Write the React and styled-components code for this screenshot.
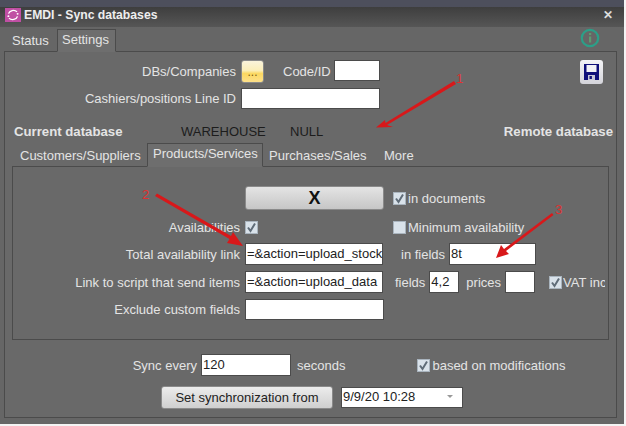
import styled, { createGlobalStyle } from "styled-components";

const GlobalStyle = createGlobalStyle`
  html, body { margin: 0; padding: 0; background: #f4f4f4; }
  * { box-sizing: border-box; }
`;

const Check = ({ on = true }) => (
  <CheckBox>
    {on && (
      <svg width="11" height="11" viewBox="0 0 11 11">
        <path d="M2 5.5 L4.5 9 L9 1.5" fill="none" stroke="#5f6c78" strokeWidth="2" />
      </svg>
    )}
  </CheckBox>
);

const AppLogo = () => (
  <LogoBox>
    <svg width="16" height="14" viewBox="0 0 16 16" preserveAspectRatio="none">
      <path d="M3.5 6.5 A5 5 0 0 1 12 4.5" fill="none" stroke="#fff" strokeWidth="1.4" />
      <path d="M12.5 9.5 A5 5 0 0 1 4 11.5" fill="none" stroke="#fff" strokeWidth="1.4" />
      <circle cx="12.6" cy="6.6" r="1" fill="#fff" />
      <circle cx="3.4" cy="9.4" r="1" fill="#fff" />
    </svg>
  </LogoBox>
);

const InfoIcon = () => (
  <InfoWrap>
    <svg width="20" height="20" viewBox="0 0 20 20">
      <circle cx="10" cy="10" r="8.2" fill="none" stroke="#2c9f88" strokeWidth="2.2" />
      <rect x="9" y="8.5" width="2.2" height="6" fill="#5e9a72" />
      <rect x="9" y="5" width="2.2" height="2" fill="#5e9a72" />
    </svg>
  </InfoWrap>
);

const Floppy = () => (
  <svg width="17" height="18" viewBox="0 0 17 18">
    <path d="M1 1 H16 V17 H1 Z" fill="#10107a" />
    <rect x="3.5" y="2" width="10" height="7" fill="#f2f2f6" />
    <rect x="5" y="12" width="7" height="5" fill="#c8c8d8" />
    <rect x="6.5" y="13" width="2.4" height="3" fill="#10107a" />
  </svg>
);

const Annotations = () => (
  <Overlay width="624" height="424" viewBox="0 0 624 424">
    <g fill="#d8181a">
      <polygon points="454,81 456,84 387,125 393,127 376,127.5 385,120 385.5,123" />
      <polygon points="155,196 157,193.5 231,236 233,232 243,246 227,243 229.5,239" />
      <polygon points="552,213 553.5,215 506,251 509,254 496,258 501,245 504,249" />
    </g>
    <AnnotationText x="456" y="83">1</AnnotationText>
    <AnnotationText x="142" y="199">2</AnnotationText>
    <AnnotationText x="555" y="214">3</AnnotationText>
  </Overlay>
);

export default function App() {
  return (
    <Window>
      <GlobalStyle />
      <TopStrip />
      <TitleBar>
        <AppLogo />
        <Title>EMDI - Sync databases</Title>
        <Close>✕</Close>
      </TitleBar>
      <Body>
        <TabRow>
          <Tab $w={52}>Status</Tab>
          <Tab $w={59} $active>Settings</Tab>
          <InfoIcon />
        </TabRow>
        <OuterPanel>
          <Row $h={23}>
            <Label $w={231}>DBs/Companies</Label>
            <DotsButton>...</DotsButton>
            <Text $ml={19}>Code/ID</Text>
            <Input $w={46} $h={21} $ml={3} $self="flex-start" />
            <SaveButton>
              <Floppy />
            </SaveButton>
          </Row>
          <Row $h={21} $mt={5}>
            <Label $w={231}>Cashiers/positions Line ID</Label>
            <Input $w={139} $ml={5} />
          </Row>
          <DbRow>
            <DbTitle>Current database</DbTitle>
            <DbValue $left={176}>WAREHOUSE</DbValue>
            <DbValue $left={285}>NULL</DbValue>
            <DbRemote>Remote database</DbRemote>
          </DbRow>
          <InnerTabs>
            <InnerTab $w={134}>Customers/Suppliers</InnerTab>
            <InnerTab $w={116} $active>Products/Services</InnerTab>
            <InnerTab $w={115} $pl={6}>Purchases/Sales</InnerTab>
            <InnerTab $w={40} $pl={6}>More</InnerTab>
          </InnerTabs>
          <InnerPanel>
            <Row $h={24}>
              <Spacer $w={232} />
              <XButton>X</XButton>
              <Check />
              <Text $ml={2}>in documents</Text>
            </Row>
            <Row $h={16} $mt={9}>
              <Label $w={227}>Availabilities</Label>
              <Spacer $w={5} />
              <Check />
              <Spacer $w={135} />
              <Check on={false} />
              <Text $ml={2}>Minimum availability</Text>
            </Row>
            <Row $h={22} $mt={8}>
              <Label $w={227}>Total availability link</Label>
              <Input $w={138} $ml={5} value="=&action=upload_stock" />
              <Text $ml={18}>in fields</Text>
              <Input $w={87} $ml={4} value="8t" />
            </Row>
            <Row $h={22} $mt={6}>
              <Label $w={227}>Link to script that send items</Label>
              <Input $w={138} $ml={5} value="=&action=upload_data" />
              <Text $ml={12}>fields</Text>
              <Input $w={30} $ml={4} value="4,2" />
              <Text $ml={7}>prices</Text>
              <Input $w={30} $ml={4} />
              <Spacer $w={14} />
              <Check />
              <Clipped>VAT inc</Clipped>
            </Row>
            <Row $h={21} $mt={6}>
              <Label $w={227}>Exclude custom fields</Label>
              <Input $w={139} $ml={5} />
            </Row>
          </InnerPanel>
          <Row $h={22} $mt={14}>
            <Label $w={192}>Sync every</Label>
            <Input $w={90} $ml={4} value="120" />
            <Text $ml={6}>seconds</Text>
            <Spacer $w={72} />
            <Check />
            <Text $ml={2}>based on modifications</Text>
          </Row>
          <Row $h={23} $mt={10}>
            <Spacer $w={156} />
            <PlainButton>Set synchronization from</PlainButton>
            <DateSelect>
              9/9/20 10:28
              <Caret />
            </DateSelect>
          </Row>
        </OuterPanel>
      </Body>
      <Annotations />
    </Window>
  );
}

const Window = styled.div`
  position: relative;
  width: 624px;
  height: 424px;
  display: flex;
  flex-direction: column;
  overflow: hidden;
  background: #666;
  font-family: "Liberation Sans", Arial, sans-serif;
  font-size: 13px;
  color: #e4e4e4;
`;

const TopStrip = styled.div`
  height: 7px;
  background: #4d4f5c;
`;

const TitleBar = styled.div`
  height: 20px;
  display: flex;
  align-items: center;
  padding: 0 0 4px 5px;
  background: linear-gradient(#3e3e3e, #565656);
`;

const LogoBox = styled.div`
  width: 16px;
  height: 14px;
  background: #c04fa4;
  display: flex;
`;

const Title = styled.div`
  margin-left: 3px;
  font-weight: 700;
  font-size: 12.2px;
  color: #eee;
`;

const Close = styled.div`
  margin-left: auto;
  margin-right: 11px;
  font-size: 12px;
  font-weight: 700;
  color: #ddd;
`;

const Body = styled.div`
  flex: 1;
  padding: 2px 7px 6px 4px;
  display: flex;
  flex-direction: column;
`;

const TabRow = styled.div`
  height: 22px;
  display: flex;
  align-items: flex-end;
  position: relative;
  z-index: 1;
`;

const Tab = styled.div`
  width: ${(p) => p.$w}px;
  height: ${(p) => (p.$active ? "23px" : "20px")};
  padding: ${(p) => (p.$active ? "0 0 3px 4px" : "0 0 1px 8px")};
  margin-left: ${(p) => (p.$active ? "1px" : "0")};
  display: flex;
  align-items: center;
  background: ${(p) => (p.$active ? "#6e6e6e" : "transparent")};
  border: ${(p) => (p.$active ? "1px solid #4b4b4b" : "none")};
  border-bottom: ${(p) => (p.$active ? "1px solid #6e6e6e" : "none")};
  margin-bottom: ${(p) => (p.$active ? "-1px" : "0")};
`;

const InfoWrap = styled.div`
  margin-left: auto;
  margin-right: 17px;
  margin-bottom: 3px;
  height: 20px;
`;

const OuterPanel = styled.div`
  flex: 1;
  border: 1px solid #4b4b4b;
  background: #696969;
  padding: 8px 0 0 0;
`;

const Row = styled.div`
  display: flex;
  align-items: center;
  height: ${(p) => p.$h}px;
  margin-top: ${(p) => p.$mt || 0}px;
  white-space: nowrap;
`;

const Label = styled.div`
  width: ${(p) => p.$w}px;
  text-align: right;
`;

const Text = styled.div`
  margin-left: ${(p) => p.$ml || 0}px;
`;

const Spacer = styled.div`
  width: ${(p) => p.$w}px;
  flex: none;
`;

const Clipped = styled.div`
  margin-left: 1px;
  width: 42px;
  overflow: hidden;
`;

const Input = styled.div.attrs((p) => ({ children: p.value }))`
  width: ${(p) => p.$w}px;
  height: ${(p) => (p.$h ? `${p.$h}px` : "100%")};
  margin-left: ${(p) => p.$ml || 0}px;
  align-self: ${(p) => p.$self || "auto"};
  flex: none;
  background: #fff;
  border: 1px solid #4b4b4b;
  color: #222;
  padding: 0 0 2px 1px;
  display: flex;
  align-items: center;
  overflow: hidden;
`;

const DotsButton = styled.div`
  width: 23px;
  height: 23px;
  margin-left: 5px;
  border-radius: 3px;
  border: 1px solid #8a8a8a;
  background: linear-gradient(#faf3dc 0%, #fbeeb8 45%, #fcd860 60%, #fde08a 100%);
  color: #7a5a10;
  font-size: 12px;
  text-align: center;
  line-height: 22px;
`;

const SaveButton = styled.div`
  width: 23px;
  height: 24px;
  margin-left: auto;
  margin-right: 13px;
  border-radius: 3px;
  background: linear-gradient(#f4f4f6, #d4d4da);
  display: flex;
  align-items: center;
  justify-content: center;
`;

const DbRow = styled.div`
  position: relative;
  height: 16px;
  margin-top: 14px;
  display: flex;
  align-items: center;
  padding: 0 3px 0 9px;
  white-space: nowrap;
`;

const DbTitle = styled.div`
  font-size: 13.2px;
  font-weight: 700;
`;

const DbValue = styled.div`
  position: absolute;
  left: ${(p) => p.$left}px;
  color: #1c1c1c;
`;

const DbRemote = styled(DbTitle)`
  margin-left: auto;
`;

const InnerTabs = styled.div`
  height: 23px;
  margin-top: 4px;
  padding-left: 8px;
  display: flex;
  align-items: flex-end;
  position: relative;
  z-index: 1;
`;

const InnerTab = styled.div`
  width: ${(p) => p.$w}px;
  flex: none;
  height: ${(p) => (p.$active ? "24px" : "21px")};
  padding: ${(p) => (p.$active ? "0 0 3px 5px" : `0 0 0 ${p.$pl || 7}px`)};
  display: flex;
  align-items: center;
  white-space: nowrap;
  background: ${(p) => (p.$active ? "#6e6e6e" : "transparent")};
  border: ${(p) => (p.$active ? "1px solid #4b4b4b" : "none")};
  border-bottom: ${(p) => (p.$active ? "1px solid #6e6e6e" : "none")};
  margin-bottom: ${(p) => (p.$active ? "-1px" : "0")};
`;

const InnerPanel = styled.div`
  width: 597px;
  height: 174px;
  margin-left: 7px;
  border: 1px solid #4b4b4b;
  padding-top: 19px;
  background: #696969;
`;

const XButton = styled.div`
  width: 139px;
  height: 24px;
  margin-right: 9px;
  border-radius: 3px;
  background: linear-gradient(#e4e4e4, #c6c6c6);
  border: 1px solid #8a8a8a;
  color: #111;
  font-size: 18px;
  font-weight: 700;
  text-align: center;
  line-height: 22px;
`;

const CheckBox = styled.div`
  width: 13px;
  height: 13px;
  flex: none;
  background: #d9e2ea;
  border: 1px solid #a9b4be;
  display: flex;
`;

const PlainButton = styled.div`
  width: 172px;
  height: 23px;
  border-radius: 3px;
  background: linear-gradient(#ececec, #cfcfcf);
  border: 1px solid #8a8a8a;
  color: #222;
  text-align: center;
  line-height: 21px;
`;

const DateSelect = styled.div`
  width: 122px;
  height: 21px;
  margin-left: 8px;
  background: #fff;
  border: 1px solid #4b4b4b;
  color: #222;
  display: flex;
  align-items: center;
  padding: 0 9px 2px 1px;
  justify-content: space-between;
`;

const Caret = styled.div`
  width: 0;
  height: 0;
  border-left: 3.5px solid transparent;
  border-right: 3.5px solid transparent;
  border-top: 3.5px solid #999;
`;

const Overlay = styled.svg`
  position: absolute;
  left: 0;
  top: 0;
  z-index: 3;
  pointer-events: none;
`;

const AnnotationText = styled.text`
  font-family: "Liberation Sans", sans-serif;
  font-size: 13px;
  fill: #e03030;
`;
